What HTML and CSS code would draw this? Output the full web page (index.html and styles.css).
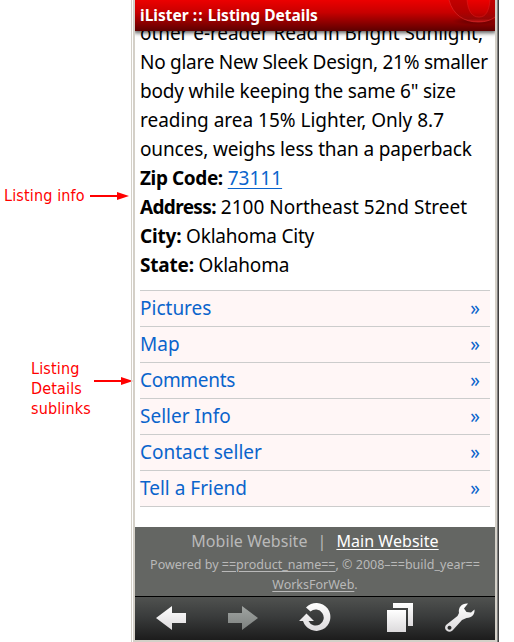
FILE: index.html
```html
<!DOCTYPE html>
<html lang="en">
<head>
<meta charset="utf-8">
<title>iLister :: Listing Details</title>
<link rel="stylesheet" href="styles.css">
</head>
<body>
<div class="page">
  <aside class="notes">
    <div class="note note-info">
      <span>Listing info</span>
      <svg width="40" height="10" viewBox="0 0 40 10"><path d="M0 5H30" stroke="#f00" stroke-width="2"/><path d="M27 1L39 5L27 9Z" fill="#f00"/></svg>
    </div>
    <div class="note note-links">
      <span>Listing<br>Details<br>sublinks</span>
      <svg width="40" height="10" viewBox="0 0 40 10"><path d="M0 5H30" stroke="#f00" stroke-width="2"/><path d="M27 1L39 5L27 9Z" fill="#f00"/></svg>
    </div>
  </aside>
  <div class="frame">
    <main class="phone">
      <header class="title">
        <span>iLister <span class="colons">::</span> Listing Details</span>
        <svg class="logo" width="50" height="31" viewBox="0 0 50 31">
          <defs>
            <linearGradient id="ring" x1="0" y1="0" x2="0" y2="1"><stop offset="0" stop-color="#c20000"/><stop offset=".55" stop-color="#b00000"/><stop offset=".85" stop-color="#980606"/><stop offset="1" stop-color="#c01818"/></linearGradient>
            <radialGradient id="shade"><stop offset="0" stop-color="#500000" stop-opacity=".8"/><stop offset="1" stop-color="#500000" stop-opacity="0"/></radialGradient>
          </defs>
          <ellipse cx="31" cy="21" rx="24" ry="4" fill="url(#shade)"/>
          <path fill="url(#ring)" fill-rule="evenodd" d="M4 0C8 15 19 22 33 22C41 22 46 20 50 17V0ZM22 0C23 11 27 17 34 17C41 17 44 11 45 0Z"/>
          <path d="M4 0C8 15 19 22 33 22C41 22 46 20 50 17" fill="none" stroke="#e02c2c" stroke-width=".8" opacity=".75"/>
          <path d="M22 0C23 11 27 17 34 17C41 17 44 11 45 0" fill="none" stroke="#e02020" stroke-width=".7" opacity=".7"/>
        </svg>
      </header>
      <section class="details">
        <p class="l0">other e-reader Read in Bright Sunlight,</p>
        <p class="l1">No glare New Sleek Design, 21% smaller</p>
        <p class="l2">body while keeping the same 6" size</p>
        <p class="l3">reading area 15% Lighter, Only 8.7</p>
        <p class="l4">ounces, weighs less than a paperback</p>
        <p><b class="zip">Zip Code:</b> <a href="#">73111</a></p>
        <p><b class="addr">Address:</b> 2100 Northeast 52nd Street</p>
        <p class="city"><b>City:</b> Oklahoma City</p>
        <p class="city"><b>State:</b> Oklahoma</p>
      </section>
      <nav class="sublinks">
        <a href="#"><span>Pictures</span><span>»</span></a>
        <a href="#"><span>Map</span><span>»</span></a>
        <a href="#"><span class="tight">Comments</span><span>»</span></a>
        <a href="#"><span>Seller Info</span><span>»</span></a>
        <a href="#"><span>Contact seller</span><span>»</span></a>
        <a href="#"><span>Tell a Friend</span><span>»</span></a>
      </nav>
      <footer class="footer">
        <div class="sites"><span>Mobile Website</span><span>|</span><a href="#">Main Website</a></div>
        <div class="powered">Powered by <a href="#">==product_name==</a>, © 2008–==build_year==<br><a href="#">WorksForWeb</a>.</div>
      </footer>
      <div class="toolbar">
        <svg width="360" height="43" viewBox="0 0 360 43">
          <defs>
            <linearGradient id="w" x1="0" y1="0" x2="0" y2="1"><stop offset="0" stop-color="#fff"/><stop offset="1" stop-color="#dcdadc"/></linearGradient>
            <linearGradient id="g" x1="0" y1="0" x2="0" y2="1"><stop offset="0" stop-color="#a0a4a2"/><stop offset="1" stop-color="#7c807e"/></linearGradient>
          </defs>
          <path fill="url(#w)" d="M21 21L37 9V16H51V26H37V33Z"/>
          <path fill="url(#g)" d="M123 21L107 9V16H93V26H107V33Z"/>
          <path fill="url(#w)" d="M171 10.500A14 14 0 1 1 168 24H164L171.500 16.500L179 24H173.500A8 8 0 1 0 175.500 14.500Z"/>
          <path fill="url(#w)" d="M258 6H278V29H273V11H258Z"/>
          <path fill="url(#w)" d="M252 13H271V35H252Z"/>
          <path fill="url(#w)" fill-rule="evenodd" d="M333 6.500L329 11.500L331.500 15L336 15.500L339.500 12.500C340 17 337 21 331.500 21L327 23L317.500 33.500C313 37 308 32 311 28L322.500 19L324 16C323 10 327 6 333 6.500ZM314.500 28.700A2 2 0 1 0 314.510 28.700Z"/>
        </svg>
      </div>
    </main>
  </div>
</div>
</body>
</html>
```

FILE: styles.css
```css
* { box-sizing: border-box; }
body { margin: 0; background: #fff; color: #000; font-family: "Noto Sans", "Open Sans", sans-serif; overflow: hidden; }
svg { display: block; }
p { margin: 0; }
.page { display: flex; height: 642px; }
.notes { width: 131px; flex: none; color: #f00; font: 16px/20px "DejaVu Sans Condensed", "DejaVu Sans", sans-serif; font-stretch: condensed; letter-spacing: .15px; }
.note { display: flex; align-items: center; white-space: nowrap; justify-content: space-between; }
.note svg { flex: none; overflow: visible; }
.note-info { padding: 186px 1px 0 4px; }
.note-links { padding: 153px 0 0 31px; margin-right: -3px; }
.note-links svg { margin-top: -16px; }
.frame { flex: none; width: 368px; display: flex; border-left: 1px solid #d4d0c8; border-right: 1px solid #404040; padding-left: 1px; }
.phone { flex: none; width: 364px; height: 642px; border: solid #d4d0c8; border-width: 0 2px 2px; display: flex; flex-direction: column; box-shadow: 1px 0 #808080; }
.title { position: relative; z-index: 1; flex: none; height: 31px; display: flex; justify-content: space-between; background: linear-gradient(#ec0000, #c80000 40%, #5c0000); box-shadow: 0 1px 4px 1px rgba(0, 0, 0, .65); clip-path: inset(0 0 -8px 0); color: #fff; font-weight: 700; font-size: 15.500px; line-height: 31px; padding-left: 5px; }
.colons { letter-spacing: 1.200px; }
.details { overflow: hidden; padding-left: 5px; font-size: 19px; line-height: 29px; white-space: nowrap; }
.details a { color: #0a64cc; text-decoration-thickness: 1px; text-underline-offset: 3px; }
.l0 { margin-top: -12px; letter-spacing: -.06px; }
.l1 { letter-spacing: -.27px; }
.l2 { letter-spacing: -.2px; }
.l3 { letter-spacing: -.01px; }
.l4 { letter-spacing: -.13px; }
.zip { letter-spacing: -.4px; }
.addr { letter-spacing: -.65px; }
.city { letter-spacing: -.2px; }
.sublinks { flex: none; margin: 10px 5px 0; background: #fff6f6; border-bottom: 1px solid #ccc; }
.sublinks a { display: flex; justify-content: space-between; height: 36px; border-top: 1px solid #ccc; padding-right: 10px; color: #0a64cc; font-size: 19px; line-height: 34px; text-decoration: none; }
.tight { letter-spacing: -.3px; }
.footer { margin-top: 20px; height: 69px; flex: none; background: #646663; color: #b9b9b9; text-align: center; }
.sites { display: flex; justify-content: center; gap: 10px; font-size: 16px; line-height: 28px; letter-spacing: .05px; }
.sites a { color: #fff; text-decoration-thickness: 1px; text-underline-offset: 2px; }
.powered { font-size: 12.500px; line-height: 20px; white-space: nowrap; }
.powered a { color: inherit; text-decoration-thickness: 1px; text-underline-offset: 2px; }
.toolbar { flex: 1; border-top: 1px solid #000; background: linear-gradient(#505250, #3a3c3c 45%, #1c1c1c); }
```
